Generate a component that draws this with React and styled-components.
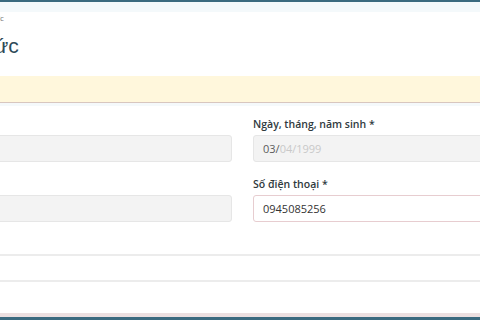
import styled, { createGlobalStyle } from 'styled-components';

const Global = createGlobalStyle`
  html, body { margin: 0; padding: 0; background: #ffffff; }
  body { font-family: 'Open Sans', 'Liberation Sans', sans-serif; }
`;

const Frame = styled.div`
  width: 480px;
  height: 320px;
  box-sizing: border-box;
  border-top: 2px solid #3b6a7f;
  border-bottom: 3px solid #3b6a7f;
  overflow: hidden;
  display: flex;
  flex-direction: column;
  background: #fff;
`;

const TopStrip = styled.div`
  height: 10px;
  flex: none;
  background: #f4f9fb;
`;

const Content = styled.div`
  margin-left: -140px;
  width: 765px;
  flex: 1;
  display: flex;
  flex-direction: column;
`;

const Header = styled.div`
  display: flex;
  flex-direction: column;
  padding: 1px 0 0;
  height: 63px;
`;

const Crumb = styled.div`
  font-size: 8px;
  line-height: 10px;
  color: #777;
  white-space: nowrap;
`;

const Title = styled.h1`
  margin: 10px 0 0;
  font-family: 'Liberation Sans', Arial, sans-serif;
  font-weight: 400;
  font-size: 21px;
  line-height: 26px;
  color: #2e4a58;
  white-space: nowrap;
`;

const Notice = styled.div`
  height: 26px;
  background: #fff7dc;
  border-bottom: 1px solid #d8c6bf;
  box-shadow: 0 3px 0 #f5f9fb;
`;

const Form = styled.div`
  display: grid;
  grid-template-columns: 372px 372px;
  column-gap: 21px;
  row-gap: 15px;
  padding-top: 14px;
`;

const Field = styled.div`
  display: flex;
  flex-direction: column;
  gap: 4px;
`;

const Label = styled.label`
  font-size: 10.5px;
  font-weight: 600;
  line-height: 14px;
  height: 14px;
  color: #2f3a3e;
`;

const Input = styled.div`
  height: 27px;
  box-sizing: border-box;
  border-radius: 3px;
  border: 1px solid ${(p) => (p.$invalid ? '#e7cdd0' : '#e6e6e6')};
  background: ${(p) => (p.$filled ? '#f3f3f3' : '#fff')};
  padding: 0 9px;
  display: flex;
  align-items: center;
  font-size: 11px;
  color: ${(p) => (p.$filled ? '#5b5b5b' : '#333')};
`;

const Faded = styled.span`
  color: #c9c9c9;
`;

const Wide = styled.div`
  grid-column: 1 / span 2;
  margin-top: 17px;
  height: 28px;
  box-sizing: border-box;
  border-top: 2px solid #ececec;
  border-bottom: 2px solid #ececec;
`;

const BottomStrip = styled.div`
  margin-top: auto;
  height: 4px;
  flex: none;
  background: #ecdfe0;
`;

export default function App() {
  return (
    <>
      <Global />
      <Frame>
        <TopStrip />
        <Content>
          <Header>
            <Crumb>Trang chủ / Khai báo y tế / Cho tổ chức</Crumb>
            <Title>Khai báo tổ chức</Title>
          </Header>
          <Notice />
          <Form>
            <Field>
              <Label />
              <Input $filled />
            </Field>
            <Field>
              <Label>Ngày, tháng, năm sinh *</Label>
              <Input $filled>
                03/<Faded>04/1999</Faded>
              </Input>
            </Field>
            <Field>
              <Label />
              <Input $filled />
            </Field>
            <Field>
              <Label>Số điện thoại *</Label>
              <Input $invalid>0945085256</Input>
            </Field>
            <Wide />
          </Form>
        </Content>
        <BottomStrip />
      </Frame>
    </>
  );
}
